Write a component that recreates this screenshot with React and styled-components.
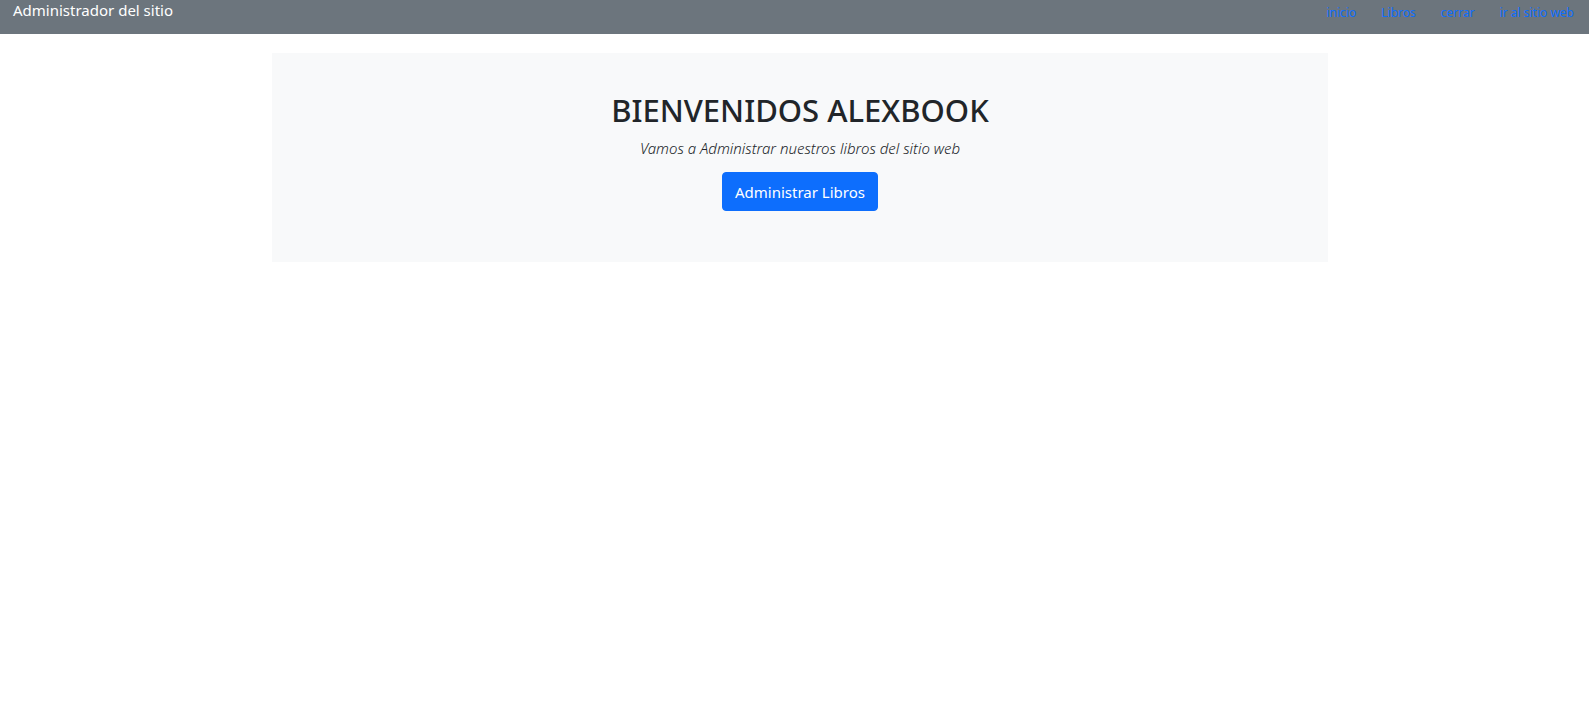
import React from "react";
import styled, { createGlobalStyle } from "styled-components";

const GlobalStyle = createGlobalStyle`
  body {
    margin: 0;
    background: #ffffff;
    font-family: "Noto Sans", "Open Sans", sans-serif;
    color: #212529;
  }
`;

const links = ["inicio", "Libros", "cerrar", "ir al sitio web"];

const App = () => {
  return (
    <>
      <GlobalStyle />
      <NavBar>
        <Brand href="#">Administrador del sitio</Brand>
        <NavLinks>
          {links.map((link) => (
            <NavLink key={link} href="#">
              {link}
            </NavLink>
          ))}
        </NavLinks>
      </NavBar>
      <Main>
        <Jumbotron>
          <Title>BIENVENIDOS ALEXBOOK</Title>
          <Lead>Vamos a Administrar nuestros libros del sitio web</Lead>
          <PrimaryButton href="#">Administrar Libros</PrimaryButton>
        </Jumbotron>
      </Main>
    </>
  );
};

const NavBar = styled.nav`
  height: 34px;
  background: #6c757d;
  display: flex;
  align-items: flex-start;
  justify-content: space-between;
  padding: 0 15px 0 13px;
`;

const Brand = styled.a`
  color: #ffffff;
  font-size: 15px;
  line-height: 21px;
  text-decoration: none;
`;

const NavLinks = styled.div`
  display: flex;
  gap: 25px;
  padding-top: 3px;
`;

const NavLink = styled.a`
  color: #0d6efd;
  font-size: 12px;
  line-height: 20px;
  text-decoration: none;
`;

const Main = styled.main`
  padding-top: 19px;
  padding-left: 272px;
`;

const Jumbotron = styled.section`
  width: 1056px;
  background: #f8f9fa;
  padding: 38px 0 51px;
  display: flex;
  flex-direction: column;
  align-items: center;
  text-align: center;
`;

const Title = styled.h1`
  margin: 0;
  font-size: 31px;
  line-height: 38px;
  font-weight: 500;
  color: #212529;
`;

const Lead = styled.p`
  margin: 7px 0 0;
  font-size: 15px;
  line-height: 24px;
  font-style: italic;
  font-weight: 300;
  color: #212529;
`;

const PrimaryButton = styled.a`
  margin-top: 12px;
  display: inline-block;
  padding: 6.5px 12px;
  font-size: 15px;
  line-height: 24px;
  color: #ffffff;
  background: #0d6efd;
  border: 1px solid #0d6efd;
  border-radius: 4px;
  text-decoration: none;
`;

export default App;
